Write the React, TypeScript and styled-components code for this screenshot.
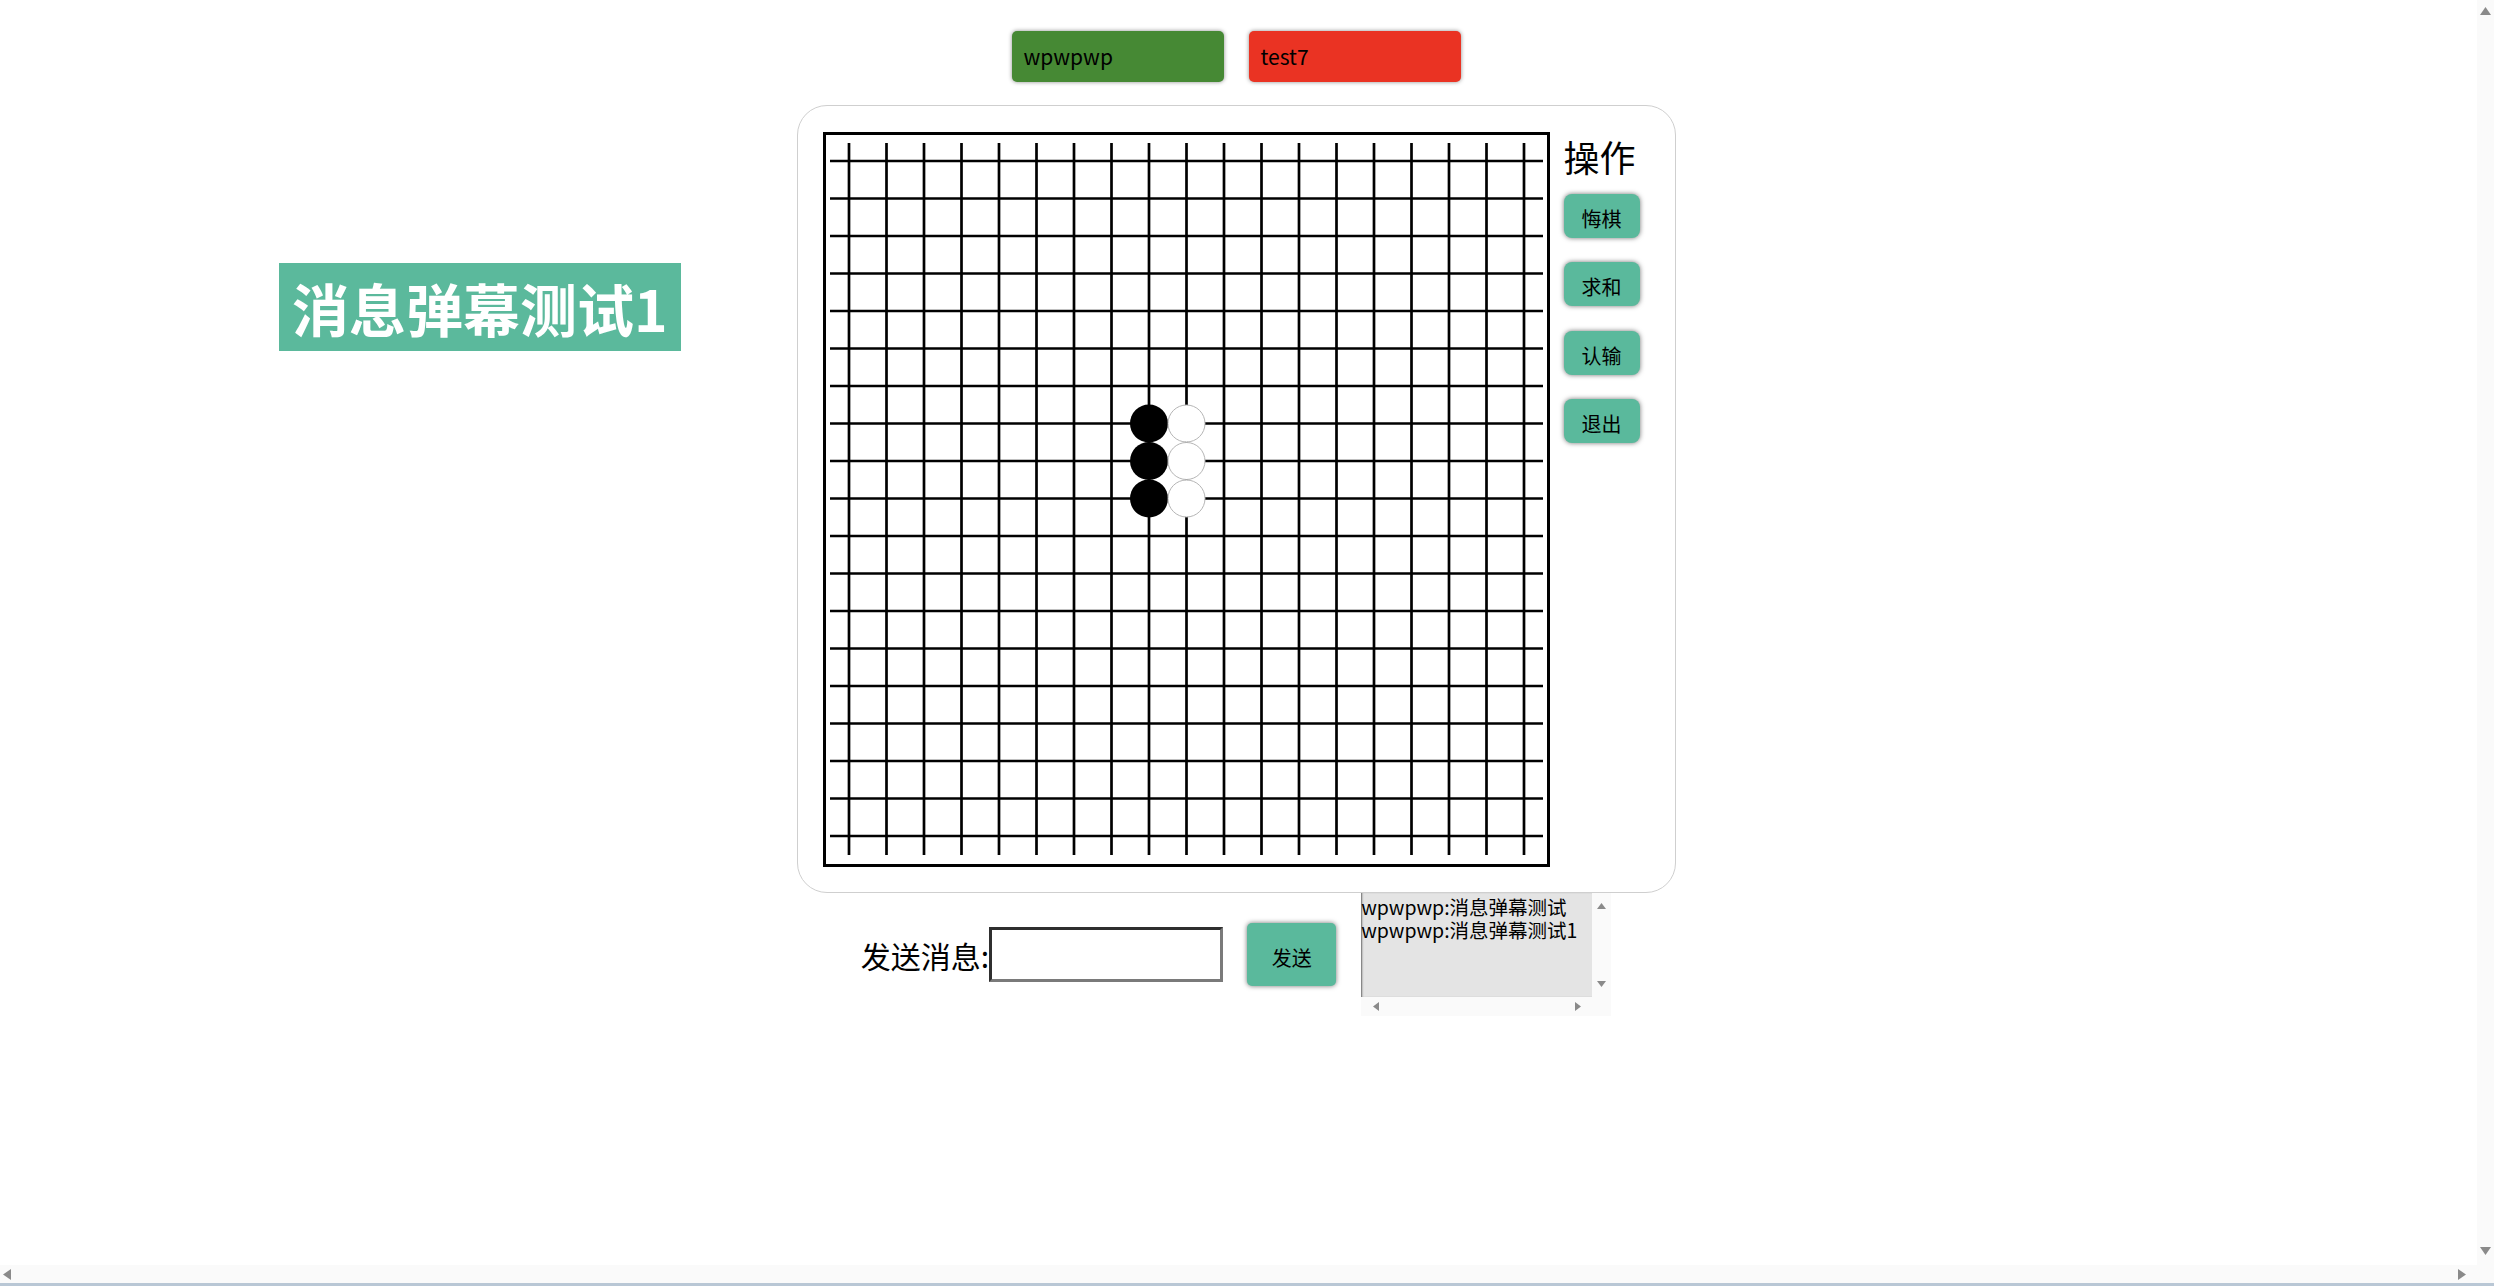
import React from "react";
import styled, { createGlobalStyle } from "styled-components";

const GlobalStyle = createGlobalStyle`
  html, body {
    margin: 0;
    padding: 0;
    background: #ffffff;
    overflow: hidden;
  }
  body {
    font-family: "Noto Sans CJK SC", "Liberation Sans", sans-serif;
    color: #000;
  }
  * { box-sizing: border-box; }
`;

const Window = styled.div`
  width: 2494px;
  height: 1286px;
  display: grid;
  grid-template-columns: 1fr 17px;
  grid-template-rows: 1fr 18px;
  border-bottom: 3px solid #b9c7d5;
`;

const Page = styled.main`
  position: relative;
  display: flex;
  flex-direction: column;
  align-items: center;
  padding: 31px 5px 0 0;
  overflow: hidden;
`;

const Track = styled.div<{ $dir: "v" | "h" }>`
  background: #fafafa;
  display: flex;
  flex-direction: ${(p) => (p.$dir === "v" ? "column" : "row")};
  justify-content: space-between;
  align-items: center;
  padding: ${(p) => (p.$dir === "v" ? "7px 0 10px" : "0 11px 0 3px")};
`;

const Corner = styled.div`
  background: #fafafa;
`;

const PlayerBar = styled.div`
  display: flex;
  gap: 25px;
`;

const PlayerTag = styled.div<{ $bg: string }>`
  width: 212px;
  height: 51px;
  padding-left: 12px;
  background: ${(p) => p.$bg};
  border-radius: 5px;
  box-shadow: 0 0 4px rgba(0, 0, 0, 0.45);
  font-size: 21px;
  line-height: 51px;
`;

const GameCard = styled.section`
  margin-top: 23px;
  display: flex;
  align-items: flex-start;
  gap: 14px;
  padding: 25.5px 35px 25.5px 25px;
  border: 1.5px solid #cfcfcf;
  border-radius: 30px;
`;

const Board = styled.div`
  border: 3px solid #000;
  width: 727px;
  height: 735px;
  svg {
    display: block;
  }
`;

const OpsColumn = styled.div`
  width: 76px;
  display: flex;
  flex-direction: column;
  gap: 24.5px;
`;

const OpsTitle = styled.div`
  font-size: 36px;
  line-height: 48px;
  margin-bottom: -10.5px;
  white-space: nowrap;
`;

const GreenButton = styled.button<{ $w: number; $h: number; $r: number }>`
  width: ${(p) => p.$w}px;
  height: ${(p) => p.$h}px;
  border: none;
  border-radius: ${(p) => p.$r}px;
  background: #5ab99c;
  box-shadow: 0 0 5px rgba(0, 0, 0, 0.55);
  font-family: "Noto Sans CJK SC", sans-serif;
  font-size: 20px;
  color: #000;
  padding: 5px 0 0;
  cursor: pointer;
`;

const ChatRow = styled.div`
  display: flex;
  align-items: center;
`;

const SendLabel = styled.span`
  font-size: 30px;
  line-height: 40px;
`;

const MessageInput = styled.input`
  width: 234px;
  height: 55px;
  padding: 0 4px;
  border-style: solid;
  border-width: 3px;
  border-color: #2f2f2f #7a7a7a #7a7a7a #2f2f2f;
  outline: none;
  font-size: 20px;
  background: #fff;
`;

const SendSlot = styled.div`
  margin-left: 24px;
`;

const ChatBox = styled.div`
  margin-left: 25px;
  width: 250px;
  height: 123px;
  display: grid;
  grid-template-columns: 231px 19px;
  grid-template-rows: 104px 19px;
`;

const ChatLog = styled.div`
  background: #e4e4e4;
  box-shadow: inset 2px 0 2px -1px rgba(0, 0, 0, 0.55);
  font-size: 19.5px;
  line-height: 22.5px;
  white-space: nowrap;
  padding-top: 3px;
`;

const SmallTrack = styled.div<{ $dir: "v" | "h" }>`
  background: #fafafa;
  display: flex;
  flex-direction: ${(p) => (p.$dir === "v" ? "column" : "row")};
  justify-content: space-between;
  align-items: center;
  padding: ${(p) => (p.$dir === "v" ? "10px 0 10px" : "0 11px 0 12px")};
`;

const Danmaku = styled.div`
  position: absolute;
  left: 279px;
  top: 263px;
  height: 88px;
  padding: 0 13px;
  background: #5bb99c;
  color: #fff;
  font-size: 57px;
  font-weight: 700;
  line-height: 88px;
  white-space: nowrap;
`;

type Dir = "up" | "down" | "left" | "right";

const Arrow: React.FC<{ dir: Dir; w: number; h: number }> = ({ dir, w, h }) => {
  const pts: Record<Dir, string> = {
    up: `0,${h} ${w / 2},0 ${w},${h}`,
    down: `0,0 ${w},0 ${w / 2},${h}`,
    left: `${w},0 ${w},${h} 0,${h / 2}`,
    right: `0,0 ${w},${h / 2} 0,${h}`,
  };
  return (
    <svg width={w} height={h} viewBox={`0 0 ${w} ${h}`}>
      <polygon points={pts[dir]} fill="#8a8a8a" />
    </svg>
  );
};

const STEP = 37.5;
const idx = Array.from({ length: 19 }, (_, i) => i);
const stones: { c: number; r: number; black: boolean }[] = [
  { c: 8, r: 7, black: true },
  { c: 8, r: 8, black: true },
  { c: 8, r: 9, black: true },
  { c: 9, r: 7, black: false },
  { c: 9, r: 8, black: false },
  { c: 9, r: 9, black: false },
];

const GoBoard: React.FC = () => (
  <Board>
    <svg width={721} height={729} viewBox="0 0 721 729">
      {idx.map((i) => (
        <line
          key={`v${i}`}
          x1={23 + i * STEP}
          y1={8}
          x2={23 + i * STEP}
          y2={720}
          stroke="#000"
          strokeWidth={2.7}
        />
      ))}
      {idx.map((j) => (
        <line
          key={`h${j}`}
          x1={4}
          y1={26 + j * STEP}
          x2={717}
          y2={26 + j * STEP}
          stroke="#000"
          strokeWidth={2.7}
        />
      ))}
      {stones.map((s) => (
        <circle
          key={`${s.c}-${s.r}`}
          cx={23 + s.c * STEP}
          cy={26 + s.r * STEP}
          r={s.black ? 19 : 18.5}
          fill={s.black ? "#000" : "#fff"}
          stroke={s.black ? "none" : "#b5b5b5"}
          strokeWidth={1}
        />
      ))}
    </svg>
  </Board>
);

const ops = ["悔棋", "求和", "认输", "退出"];

export default function App() {
  return (
    <>
      <GlobalStyle />
      <Window>
        <Page>
          <PlayerBar>
            <PlayerTag $bg="#468934">wpwpwp</PlayerTag>
            <PlayerTag $bg="#ea3323">test7</PlayerTag>
          </PlayerBar>
          <GameCard>
            <GoBoard />
            <OpsColumn>
              <OpsTitle>操作</OpsTitle>
              {ops.map((o) => (
                <GreenButton key={o} $w={76} $h={44} $r={8}>
                  {o}
                </GreenButton>
              ))}
            </OpsColumn>
          </GameCard>
          <ChatRow>
            <SendLabel>发送消息:</SendLabel>
            <MessageInput type="text" />
            <SendSlot>
              <GreenButton $w={89} $h={63} $r={5}>
                发送
              </GreenButton>
            </SendSlot>
            <ChatBox>
              <ChatLog>
                <div>wpwpwp:消息弹幕测试</div>
                <div>wpwpwp:消息弹幕测试1</div>
              </ChatLog>
              <SmallTrack $dir="v">
                <Arrow dir="up" w={9} h={6} />
                <Arrow dir="down" w={9} h={6} />
              </SmallTrack>
              <SmallTrack $dir="h">
                <Arrow dir="left" w={6} h={9} />
                <Arrow dir="right" w={6} h={9} />
              </SmallTrack>
              <Corner />
            </ChatBox>
          </ChatRow>
          <Danmaku>消息弹幕测试1</Danmaku>
        </Page>
        <Track $dir="v">
          <Arrow dir="up" w={11} h={8} />
          <Arrow dir="down" w={11} h={8} />
        </Track>
        <Track $dir="h">
          <Arrow dir="left" w={8} h={11} />
          <Arrow dir="right" w={8} h={11} />
        </Track>
        <Corner />
      </Window>
    </>
  );
}
